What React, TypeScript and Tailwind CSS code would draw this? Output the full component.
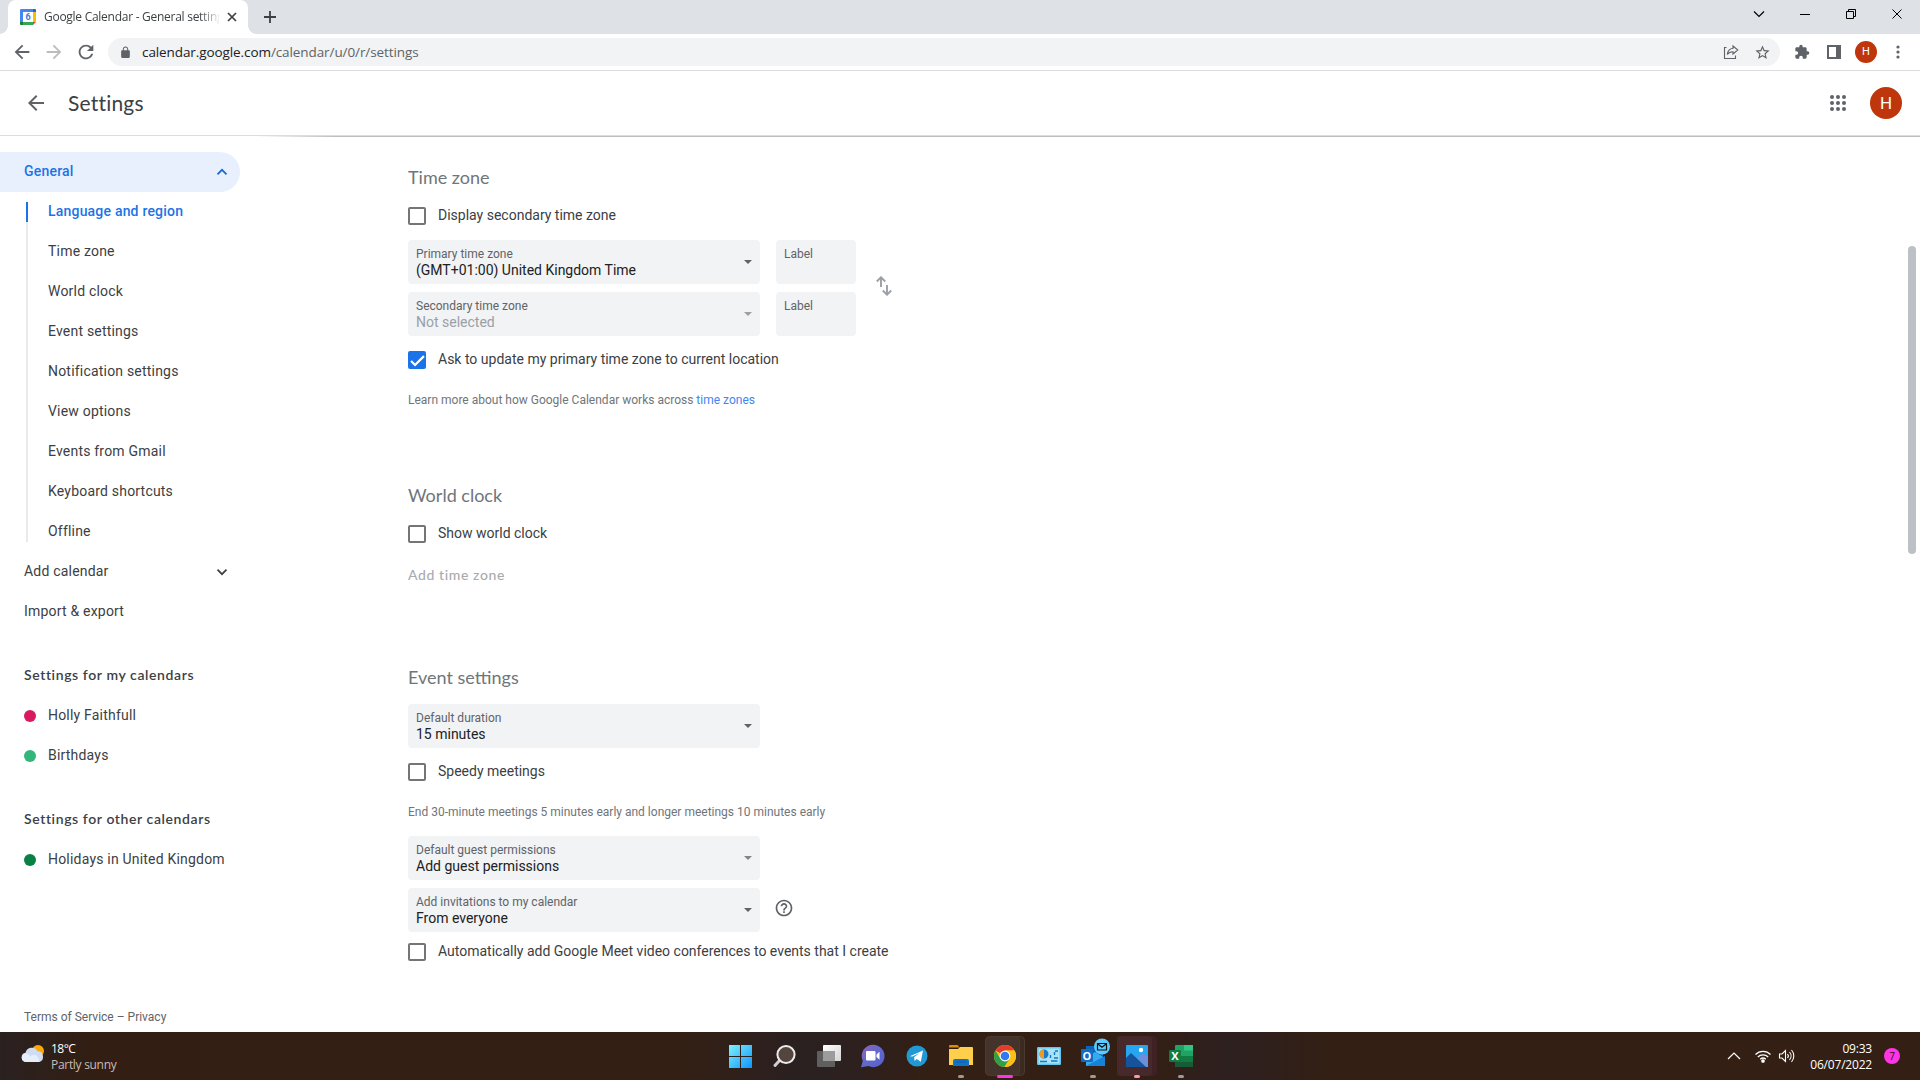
import type { ReactNode } from "react";

const ARROW_BACK = "M20 11H7.83l5.59-5.59L12 4l-8 8 8 8 1.41-1.41L7.83 13H20v-2z";
const ARROW_FORWARD = "M12 4l-1.41 1.41L16.17 11H4v2h12.17l-5.58 5.59L12 20l8-8z";
const RELOAD =
  "M17.65 6.35C16.2 4.9 14.21 4 12 4c-4.42 0-7.99 3.58-7.99 8s3.57 8 7.99 8c3.73 0 6.84-2.55 7.73-6h-2.08c-.82 2.33-3.04 4-5.65 4-3.31 0-6-2.69-6-6s2.69-6 6-6c1.66 0 3.14.69 4.22 1.78L13 11h7V4l-2.35 2.35z";
const LOCK =
  "M18 8h-1V6c0-2.76-2.24-5-5-5S7 3.24 7 6v2H6c-1.1 0-2 .9-2 2v10c0 1.1.9 2 2 2h12c1.1 0 2-.9 2-2V10c0-1.1-.9-2-2-2zM15.1 8H8.9V6c0-1.71 1.39-3.1 3.1-3.1s3.1 1.39 3.1 3.1v2z";
const STAR =
  "M22 9.24l-7.19-.62L12 2 9.19 8.63 2 9.24l5.46 4.73L5.82 21 12 17.27 18.18 21l-1.63-7.03L22 9.24zM12 15.4l-3.76 2.27 1-4.28-3.32-2.88 4.38-.38L12 6.1l1.71 4.04 4.38.38-3.32 2.88 1 4.28L12 15.4z";
const PUZZLE =
  "M20.5 11H19V7c0-1.1-.9-2-2-2h-4V3.5a2.5 2.5 0 0 0-5 0V5H4c-1.1 0-1.99.9-1.99 2v3.8H3.5c1.49 0 2.7 1.21 2.7 2.7s-1.21 2.7-2.7 2.7H2V20c0 1.1.9 2 2 2h3.8v-1.5c0-1.49 1.21-2.7 2.7-2.7s2.7 1.21 2.7 2.7V22H17c1.1 0 2-.9 2-2v-4h1.5a2.5 2.5 0 0 0 0-5z";
const HELP =
  "M11 18h2v-2h-2v2zm1-16C6.48 2 2 6.48 2 12s4.48 10 10 10 10-4.48 10-10S17.52 2 12 2zm0 18c-4.41 0-8-3.59-8-8s3.59-8 8-8 8 3.59 8 8-3.59 8-8 8zm0-14c-2.21 0-4 1.79-4 4h2c0-1.1.9-2 2-2s2 .9 2 2c0 2-3 1.75-3 5h2c0-2.25 3-2.5 3-5 0-2.21-1.79-4-4-4z";

function Glyph({ d, className }: { d: string; className: string }) {
  return (
    <svg viewBox="0 0 24 24" fill="currentColor" className={`shrink-0 ${className}`}>
      <path d={d} />
    </svg>
  );
}

function CalendarLogo() {
  return (
    <svg viewBox="0 0 16 16" className="w-4 h-4 shrink-0">
      <path d="M1 0h12v3H3v10H0V1a1 1 0 0 1 1-1z" fill="#4285f4" />
      <path d="M13 0h2a1 1 0 0 1 1 1v2h-3z" fill="#1967d2" />
      <path d="M13 3h3v10h-3z" fill="#fbbc04" />
      <path d="M3 13h10v3H3z" fill="#34a853" />
      <path d="M0 13h3v3H1a1 1 0 0 1-1-1z" fill="#188038" />
      <path d="M13 13h3l-3 3z" fill="#ea4335" />
      <path d="M3 3h10v10H3z" fill="#fff" />
      <text x="8" y="11" textAnchor="middle" fontSize="9" fontWeight="700" fontFamily="Roboto, sans-serif" fill="#3b78e7">
        6
      </text>
    </svg>
  );
}

function TabStrip() {
  return (
    <div className="h-[34px] bg-[#dee1e6] flex items-start pl-2 font-['Open_Sans',sans-serif]">
      <div className="relative w-60 h-[34px] bg-white rounded-t-lg flex items-center pl-3">
        <span className="absolute -left-2 bottom-0 w-2 h-2 bg-[radial-gradient(circle_at_0_0,#dee1e6_7.5px,#fff_8px)]" />
        <span className="absolute -right-2 bottom-0 w-2 h-2 bg-[radial-gradient(circle_at_100%_0,#dee1e6_7.5px,#fff_8px)]" />
        <CalendarLogo />
        <span className="ml-2 w-[175px] overflow-hidden whitespace-nowrap text-xs leading-4 text-[#3c4043] tracking-[-0.27px] [mask-image:linear-gradient(90deg,#000_155px,transparent_177px)]">
          Google Calendar - General settings
        </span>
        <svg viewBox="0 0 10 10" className="w-2.5 h-2.5 ml-2 shrink-0" stroke="#3c4043" strokeWidth="1.7">
          <path d="M1 1l8 8M9 1L1 9" />
        </svg>
      </div>
      <svg viewBox="0 0 12 12" className="w-3 h-3 ml-4 mt-[11px]" stroke="#3c4043" strokeWidth="1.8">
        <path d="M6 0v12M0 6h12" />
      </svg>
      <div className="ml-auto flex h-7">
        <svg viewBox="0 0 46 28" className="w-[46px] h-7" fill="none" stroke="#000" strokeWidth="1.2">
          <path d="M18 11.5l5 5 5-5" />
        </svg>
        <svg viewBox="0 0 46 28" className="w-[46px] h-7" fill="none" stroke="#000">
          <path d="M18 14.5h10" />
        </svg>
        <svg viewBox="0 0 46 28" className="w-[46px] h-7" fill="none" stroke="#000">
          <path d="M18.5 11.5h7v7h-7zM20.5 11.5v-2h7v7h-2" />
        </svg>
        <svg viewBox="0 0 46 28" className="w-[46px] h-7" fill="none" stroke="#000">
          <path d="M18.5 9.5l9 9M27.5 9.5l-9 9" />
        </svg>
      </div>
    </div>
  );
}

function Toolbar() {
  return (
    <div className="h-[37px] bg-white border-b border-[#dadce0] flex items-start pt-1 text-[#5f6368] font-['Open_Sans',sans-serif]">
      <div className="flex h-7 items-center w-[108px] shrink-0">
        <Glyph d={ARROW_BACK} className="w-[22px] h-[22px] ml-[11px]" />
        <Glyph d={ARROW_FORWARD} className="w-[22px] h-[22px] ml-[10px] text-[#babcbe]" />
        <Glyph d={RELOAD} className="w-[22px] h-[22px] ml-[10px]" />
      </div>
      <div className="h-7 w-[1672px] rounded-full bg-[#f1f3f4] flex items-center pl-[11px] pr-[9px]">
        <Glyph d={LOCK} className="w-[13px] h-[13px]" />
        <span className="ml-[10px] text-[13.5px] leading-5 tracking-[-0.09px] text-[#5f6368]">
          <span className="text-[#202124]">calendar.google.com</span>/calendar/u/0/r/settings
        </span>
        <svg viewBox="0 0 16 16" className="w-4 h-4 ml-auto" fill="none" stroke="#5f6368" strokeWidth="1.1">
          <path d="M3.5 3.5h-2v11h11v-3" />
          <path d="M10 2l4.800 4L10 10V7.700c-2.700 0-4.500.9-5.700 2.800C4.700 7 6.500 4.600 10 4.200z" />
        </svg>
        <Glyph d={STAR} className="w-[17px] h-[17px] ml-[15px]" />
      </div>
      <Glyph d={PUZZLE} className="w-4 h-4 ml-[14px] mt-[6px]" />
      <svg viewBox="0 0 14 14" className="w-[14px] h-[14px] ml-[17px] mt-[7px] shrink-0">
        <path d="M0 0h14v14H0zM2 2v10h7V2z" fill="#5f6368" fillRule="evenodd" />
      </svg>
      <span className="ml-[14px] mt-[3px] w-[22px] h-[22px] rounded-full bg-[#bf360c] text-white text-[11px] leading-[22px] text-center font-['Roboto',sans-serif]">
        H
      </span>
      <svg viewBox="0 0 4 14" className="w-1 h-[14px] ml-[19px] mt-[7px] shrink-0" fill="#5f6368">
        <circle cx="2" cy="2" r="1.600" />
        <circle cx="2" cy="7" r="1.600" />
        <circle cx="2" cy="12" r="1.600" />
      </svg>
    </div>
  );
}

function SettingsHeader() {
  return (
    <header className="h-[66px] flex flex-col">
      <div className="h-16 flex items-center">
        <Glyph d={ARROW_BACK} className="w-6 h-6 ml-6 text-[#5f6368]" />
        <h1 className="ml-5 font-['Lato',sans-serif] text-[21px] leading-7 tracking-[0.2px] text-[#3c4043]">Settings</h1>
        <svg viewBox="0 0 16 16" className="w-4 h-4 ml-auto" fill="#5f6368">
          {[2, 8, 14].map((y) => [2, 8, 14].map((x) => <circle key={`${x}-${y}`} cx={x} cy={y} r="2" />))}
        </svg>
        <span className="w-8 h-8 ml-6 mr-[18px] rounded-full bg-[#bf360c] text-white text-[17px] leading-[33px] text-center">
          H
        </span>
      </div>
      <div className="h-px bg-[#dadce0]" />
      <div className="h-px ml-64 bg-[linear-gradient(90deg,#fff,#bdbdbd_80px)]" />
    </header>
  );
}

function Chevron({ up = false, className }: { up?: boolean; className: string }) {
  return (
    <svg viewBox="0 0 12 8" className={`w-3 h-2 ${className}`} fill="none" stroke="currentColor" strokeWidth="1.700">
      <path d={up ? "M1.500 6.300L6 1.800l4.500 4.500" : "M1.500 1.700L6 6.200l4.500-4.500"} />
    </svg>
  );
}

const sections = [
  "Language and region",
  "Time zone",
  "World clock",
  "Event settings",
  "Notification settings",
  "View options",
  "Events from Gmail",
  "Keyboard shortcuts",
  "Offline",
];

function CalendarRow({ name, color }: { name: string; color: string }) {
  return (
    <div className="h-10 pl-6 flex items-center">
      <span className={`w-3 h-3 rounded-full mt-[2px] ${color}`} />
      <span className="ml-3">{name}</span>
    </div>
  );
}

function SidebarTitle({ children }: { children: ReactNode }) {
  return (
    <h2 className="h-10 pl-6 flex items-center font-['Lato',sans-serif] font-semibold tracking-[0.6px]">{children}</h2>
  );
}

function Sidebar() {
  return (
    <nav className="w-60 shrink-0 pt-[15px] text-sm leading-5 tracking-[0.2px] text-[#3c4043] flex flex-col">
      <div className="h-10 rounded-r-full bg-[#e8f0fe] text-[#1967d2] font-medium pl-6 pr-3 flex items-center justify-between">
        <span className="pb-[2px] text-[#1a73e8]">General</span>
        <Chevron up className="text-[#1967d2]" />
      </div>
      <div className="flex">
        <div className="ml-[26px] mt-[10px] w-[2px] h-[340px] bg-[#e8eaed]">
          <div className="h-5 bg-[#1a73e8]" />
        </div>
        <ul className="ml-5">
          {sections.map((name, i) => (
            <li key={name} className={`h-10 pb-[2px] flex items-center ${i === 0 ? "text-[#1a73e8] font-medium" : ""}`}>
              {name}
            </li>
          ))}
        </ul>
      </div>
      <div className="h-10 pl-6 pr-3 flex items-center justify-between">
        <span className="pb-[2px]">Add calendar</span>
        <Chevron className="text-[#3c4043]" />
      </div>
      <div className="h-10 pl-6 pb-[2px] flex items-center">Import &amp; export</div>
      <div className="mt-[23px]">
        <SidebarTitle>Settings for my calendars</SidebarTitle>
        <CalendarRow name="Holly Faithfull" color="bg-[#d81b60]" />
        <CalendarRow name="Birthdays" color="bg-[#33b679]" />
      </div>
      <div className="mt-6">
        <SidebarTitle>Settings for other calendars</SidebarTitle>
        <CalendarRow name="Holidays in United Kingdom" color="bg-[#0b8043]" />
      </div>
      <div className="mt-auto mb-[7px] pl-6 text-xs leading-4 tracking-normal text-[#5f6368]">Terms of Service – Privacy</div>
    </nav>
  );
}

function Checkbox({ label, checked = false }: { label: string; checked?: boolean }) {
  return (
    <label className="h-[18px] flex items-center">
      {checked ? (
        <span className="w-[18px] h-[18px] rounded-[2px] bg-[#1a73e8] flex items-center justify-center">
          <svg viewBox="0 0 24 24" className="w-[15px] h-[15px]" fill="none" stroke="#fff" strokeWidth="3.600">
            <path d="M1.700 12.700l6.400 6.400L22.300 5" />
          </svg>
        </span>
      ) : (
        <span className="w-[18px] h-[18px] rounded-[2px] border-2 border-[#757575]" />
      )}
      <span className="ml-3 pb-[2px] text-sm leading-5 text-[#3c4043] whitespace-nowrap">{label}</span>
    </label>
  );
}

interface SelectProps {
  label: string;
  value: string;
  muted?: boolean;
  caret?: string;
}

function Select({ label, value, muted = false, caret = "text-[#5f6368]" }: SelectProps) {
  return (
    <div className="w-[352px] h-11 rounded bg-[#f1f3f4] px-2 flex items-center justify-between">
      <div>
        <div className="text-xs leading-4 text-[#5f6368]">{label}</div>
        <div className={`text-sm leading-4 ${muted ? "text-[#9aa0a6]" : "text-[#202124]"}`}>{value}</div>
      </div>
      <svg viewBox="0 0 8 4" className={`w-2 h-1 ${caret}`} fill="currentColor">
        <path d="M0 0h8L4 4z" />
      </svg>
    </div>
  );
}

function LabelInput() {
  return <div className="w-20 h-11 rounded bg-[#f1f3f4] pl-2 pt-[6px] text-xs leading-4 text-[#5f6368]">Label</div>;
}

function Heading({ children }: { children: ReactNode }) {
  return <h2 className="h-6 font-['Lato',sans-serif] text-[18px] leading-6 text-[#70757a]">{children}</h2>;
}

function SettingsPanel() {
  return (
    <section className="ml-[168px] w-[520px] pt-7 flex flex-col">
      <Heading>Time zone</Heading>
      <div className="mt-[18px]">
        <Checkbox label="Display secondary time zone" />
      </div>
      <div className="mt-[15px] flex items-center">
        <div className="flex flex-col gap-2">
          <div className="flex gap-4">
            <Select label="Primary time zone" value="(GMT+01:00) United Kingdom Time" />
            <LabelInput />
          </div>
          <div className="flex gap-4">
            <Select label="Secondary time zone" value="Not selected" muted caret="text-[#9aa0a6]" />
            <LabelInput />
          </div>
        </div>
        <svg viewBox="0 0 16 20" className="w-4 h-5 ml-5 mb-1" fill="none" stroke="#9aa0a6" strokeWidth="1.900">
          <path d="M5 11V1.500M.8 5.500L5 1.300l4.200 4.200M11 9v9.500M6.800 14.500l4.200 4.200 4.200-4.200" />
        </svg>
      </div>
      <div className="mt-[15px]">
        <Checkbox label="Ask to update my primary time zone to current location" checked />
      </div>
      <p className="mt-[23px] text-xs leading-4 text-[#70757a]">
        Learn more about how Google Calendar works across <a className="text-[#4285f4]">time zones</a>
      </p>
      <div className="mt-[75px]">
        <Heading>World clock</Heading>
      </div>
      <div className="mt-[18px]">
        <Checkbox label="Show world clock" />
      </div>
      <div className="mt-[22px] h-5 font-['Lato',sans-serif] font-medium text-sm leading-5 tracking-[0.6px] text-[#a9abae]">
        Add time zone
      </div>
      <div className="mt-20">
        <Heading>Event settings</Heading>
      </div>
      <div className="mt-[15px]">
        <Select label="Default duration" value="15 minutes" />
      </div>
      <div className="mt-[15px]">
        <Checkbox label="Speedy meetings" />
      </div>
      <p className="mt-[23px] text-xs leading-4 text-[#70757a]">
        End 30-minute meetings 5 minutes early and longer meetings 10 minutes early
      </p>
      <div className="mt-4">
        <Select label="Default guest permissions" value="Add guest permissions" caret="text-[#80868b]" />
      </div>
      <div className="mt-2 flex items-center">
        <Select label="Add invitations to my calendar" value="From everyone" />
        <Glyph d={HELP} className="w-5 h-5 ml-[14px] mb-[4px] text-[#5f6368]" />
      </div>
      <div className="mt-[11px]">
        <Checkbox label="Automatically add Google Meet video conferences to events that I create" />
      </div>
    </section>
  );
}

function TaskIcon({ children }: { children: ReactNode }) {
  return (
    <svg viewBox="0 0 44 48" className="w-11 h-12 shrink-0">
      {children}
    </svg>
  );
}

function RunningDot() {
  return <rect x="19" y="43" width="6" height="3" rx="1.500" fill="#a09a96" />;
}

function TaskIcons() {
  return (
    <>
      <TaskIcon>
        <defs>
          <linearGradient id="win" x1="0" y1="0" x2="1" y2="1">
            <stop offset="0" stopColor="#7df0ff" />
            <stop offset="1" stopColor="#0f95fb" />
          </linearGradient>
        </defs>
        <path d="M10 13h11v11H10zM22 13h11v11H22zM10 25h11v11H10zM22 25h11v11H22z" fill="url(#win)" />
      </TaskIcon>
      <TaskIcon>
        <path d="M16.500 28.500L12 33.500" stroke="#d0d0d0" strokeWidth="3" strokeLinecap="round" />
        <circle cx="23" cy="22.500" r="8.600" fill="#54463f" stroke="#ececec" strokeWidth="2" />
      </TaskIcon>
      <TaskIcon>
        <defs>
          <linearGradient id="view" x1="0" y1="0" x2="1" y2="1">
            <stop offset="0" stopColor="#fff" />
            <stop offset="1" stopColor="#d4d4d4" />
          </linearGradient>
        </defs>
        <rect x="16" y="13" width="18" height="16" rx="1" fill="url(#view)" />
        <rect x="10" y="19" width="18" height="16" rx="1" fill="#666" fillOpacity=".9" />
        <path d="M16 19h12v10H16z" fill="#9c9c9c" />
      </TaskIcon>
      <TaskIcon>
        <defs>
          <linearGradient id="chat" x1="0" y1="0" x2="1" y2="1">
            <stop offset="0" stopColor="#9564b8" />
            <stop offset=".5" stopColor="#6268cc" />
            <stop offset="1" stopColor="#5561cf" />
          </linearGradient>
        </defs>
        <path d="M22.300 12.800a11.200 11.200 0 1 1-4.800 21.300L10 35.200l1.800-6.300a11.200 11.200 0 0 1 10.500-16.100z" fill="url(#chat)" />
        <rect x="15" y="19" width="9.500" height="9.500" rx="1" fill="#fff" />
        <path d="M25.500 22.500l3-2.700v8l-3-2.700z" fill="#fff" />
      </TaskIcon>
      <TaskIcon>
        <circle cx="22" cy="24" r="10.500" fill="#2199d3" />
        <path d="M14.800 24.200l13.200-5.700-2.200 11.300-4.100-2.900-2 2-.7-3.700 5.500-4.300-6.900 3.700z" fill="#fff" />
      </TaskIcon>
      <TaskIcon>
        <path d="M10 14a1 1 0 0 1 1-1h7.500l2 2.500H10z" fill="#d89000" />
        <path d="M10 17h9l2-2h12a1 1 0 0 1 1 1v17H10z" fill="#ffce4b" />
        <path d="M14 34v-5a2 2 0 0 1 2-2h12a2 2 0 0 1 2 2v5z" fill="#1173c8" />
        <path d="M17 30h10" stroke="#0c5ca8" />
        <RunningDot />
      </TaskIcon>
      <TaskIcon>
        <rect x="7.500" y="4.500" width="34" height="39" rx="4" fill="#3b2a20" stroke="#4b3a31" />
        <rect x="2.500" y="4.500" width="34" height="39" rx="4" fill="#44332a" stroke="#4b3a31" />
        <circle cx="22" cy="24" r="11" fill="#fbc116" />
        <path d="M22 24L12.500 18.500A11 11 0 0 1 31.500 18.500H22z" fill="#e33b2e" />
        <path d="M12.470 18.500a11 11 0 0 0 9 16.480L26.700 26.600 17.200 26.600z" fill="#2da04a" />
        <path d="M31.530 18.500H22l4.800 8.200-5.300 8.300a11 11 0 0 0 10.030-16.500z" fill="#fbc116" />
        <circle cx="22" cy="24" r="5.400" fill="#fff" />
        <circle cx="22" cy="24" r="4.300" fill="#3079ee" />
        <rect x="14" y="43" width="16" height="3" rx="1.500" fill="#ff34e4" />
      </TaskIcon>
      <TaskIcon>
        <rect x="10" y="15" width="24" height="18" rx="1" fill="#61c5ef" />
        <rect x="11.500" y="16.500" width="21" height="15" fill="#a7e4fb" />
        <circle cx="17" cy="22" r="4.500" fill="#1e78c8" />
        <path d="M17 22v-4.500a4.500 4.500 0 0 0-4.500 4.500 4.500 4.500 0 0 0 4.500 4.500z" fill="#f39a1e" />
        <path d="M13 29.500h7M23.500 23v3M27.500 20v3M28 19h3M24 29h6.500M27 26h4" stroke="#1677be" strokeWidth="1.400" fill="none" />
      </TaskIcon>
      <TaskIcon>
        <path d="M15 14h17v19H15z" fill="#0a64b8" />
        <path d="M15 25l9-5 10 6v8H15z" fill="#35aaf0" />
        <path d="M15 34l19-10v10z" fill="#1683d8" />
        <rect x="10" y="17" width="12" height="13" rx="1" fill="#0f6cc7" />
        <text x="16" y="27.500" textAnchor="middle" fontSize="11" fontWeight="700" fontFamily="Open Sans, sans-serif" fill="#fff">
          O
        </text>
        <circle cx="31" cy="14.500" r="8" fill="#5ccbff" />
        <path d="M26.500 11.500h9v6.500h-9zM26.500 11.800l4.500 3.500 4.500-3.500" fill="none" stroke="#111" strokeWidth="1.200" />
        <RunningDot />
      </TaskIcon>
      <TaskIcon>
        <rect x="6" y="4" width="36" height="40" rx="4" fill="#3f2125" />
        <rect x="2" y="4" width="35" height="40" rx="4" fill="#47282b" />
        <rect x="11" y="13" width="22" height="22" rx="1" fill="#25a6ef" />
        <path d="M21 27l7-6 5 4v10H21z" fill="#6d8edb" />
        <path d="M11 26l5-5 15 14H11z" fill="#15539b" />
        <circle cx="26" cy="18" r="2.200" fill="#fff" />
        <rect x="19" y="43" width="6" height="3" rx="1.500" fill="#ff99a4" />
      </TaskIcon>
      <TaskIcon>
        <rect x="16" y="13" width="18" height="22" rx="1" fill="#21a366" />
        <path d="M25 13h9v5.500h-9z" fill="#33c481" />
        <path d="M16 24h9v5.500h-9zM25 24h9v5.500h-9z" fill="#107c41" />
        <path d="M16 29.500h18V35H16z" fill="#185c37" />
        <rect x="10" y="18" width="12" height="12" rx="1" fill="#107c41" />
        <text x="16" y="28" textAnchor="middle" fontSize="11" fontWeight="700" fontFamily="Open Sans, sans-serif" fill="#fff">
          X
        </text>
        <RunningDot />
      </TaskIcon>
    </>
  );
}

function Taskbar() {
  return (
    <footer className="h-12 flex items-center text-white text-xs font-['Open_Sans',sans-serif] bg-[linear-gradient(90deg,#2a2120_0px,#321e13_90px,#331f14_680px,#2b2020_790px,#2c2020_840px,#331f14_930px,#331f14_1150px,#2d2020_1230px,#331f14_1330px,#331f14_1920px)]">
      <div className="w-[719px] flex items-center">
        <svg viewBox="0 0 24 20" className="w-6 h-5 ml-[21px] mb-1">
          <circle cx="17" cy="7" r="6" fill="#fba90a" />
          <path d="M5 18a4.700 4.700 0 0 1-.5-9.300 6.500 6.500 0 0 1 12-1.500A5.500 5.500 0 0 1 18 18z" fill="#cfdcf2" />
          <path d="M5 18a4.300 4.300 0 0 1 0-8.600c2.500 0 3.500 1.600 4.500 3.100C11 10 17 9 18.500 18z" fill="#e6eefb" />
        </svg>
        <div className="ml-[6px] pt-[2px]">
          <div className="leading-4 tracking-[-0.5px]">18°C</div>
          <div className="leading-4 tracking-[-0.3px] text-[#c5bdb8]">Partly sunny</div>
        </div>
      </div>
      <TaskIcons />
      <div className="ml-auto flex items-center">
        <svg viewBox="0 0 14 8" className="w-[14px] h-2" fill="none" stroke="#fff" strokeWidth="1.200">
          <path d="M1 7l6-6 6 6" />
        </svg>
        <svg viewBox="0 0 18 14" className="w-[18px] h-[14px] ml-[13px]" fill="none" stroke="#fff" strokeWidth="1.300">
          <path d="M1.500 5.500a10.500 10.500 0 0 1 15 0M3.800 8a7.400 7.400 0 0 1 10.400 0M6.200 10.200a4.200 4.200 0 0 1 5.600 0" />
          <circle cx="9" cy="12" r="1.200" fill="#fff" />
        </svg>
        <svg viewBox="0 0 18 14" className="w-[18px] h-[14px] ml-[6px]" fill="none" stroke="#fff" strokeWidth="1.100">
          <path d="M1.500 5h2.500l3.500-3.500v11L4 9H1.500zM9.500 5a3 3 0 0 1 0 4M11.500 3a6 6 0 0 1 0 8M13.500 1a9 9 0 0 1 0 12" />
        </svg>
        <div className="w-[76px] pt-px text-right tracking-[-0.2px]">
          <div className="leading-4">09:33</div>
          <div className="leading-4">06/07/2022</div>
        </div>
        <span className="w-4 h-4 ml-3 mr-5 rounded-full bg-[#ff34e4] text-[#3a0f20] text-[10px] leading-4 text-center">7</span>
      </div>
    </footer>
  );
}

export default function App() {
  return (
    <div className="w-[1920px] h-[1080px] overflow-hidden bg-white flex flex-col font-['Roboto',sans-serif]">
      <TabStrip />
      <Toolbar />
      <SettingsHeader />
      <div className="h-[895px] flex">
        <Sidebar />
        <SettingsPanel />
        <div className="ml-auto w-3 pt-[109px]">
          <div className="w-2 h-[308px] rounded-full bg-[#bdc1c6]" />
        </div>
      </div>
      <Taskbar />
    </div>
  );
}
